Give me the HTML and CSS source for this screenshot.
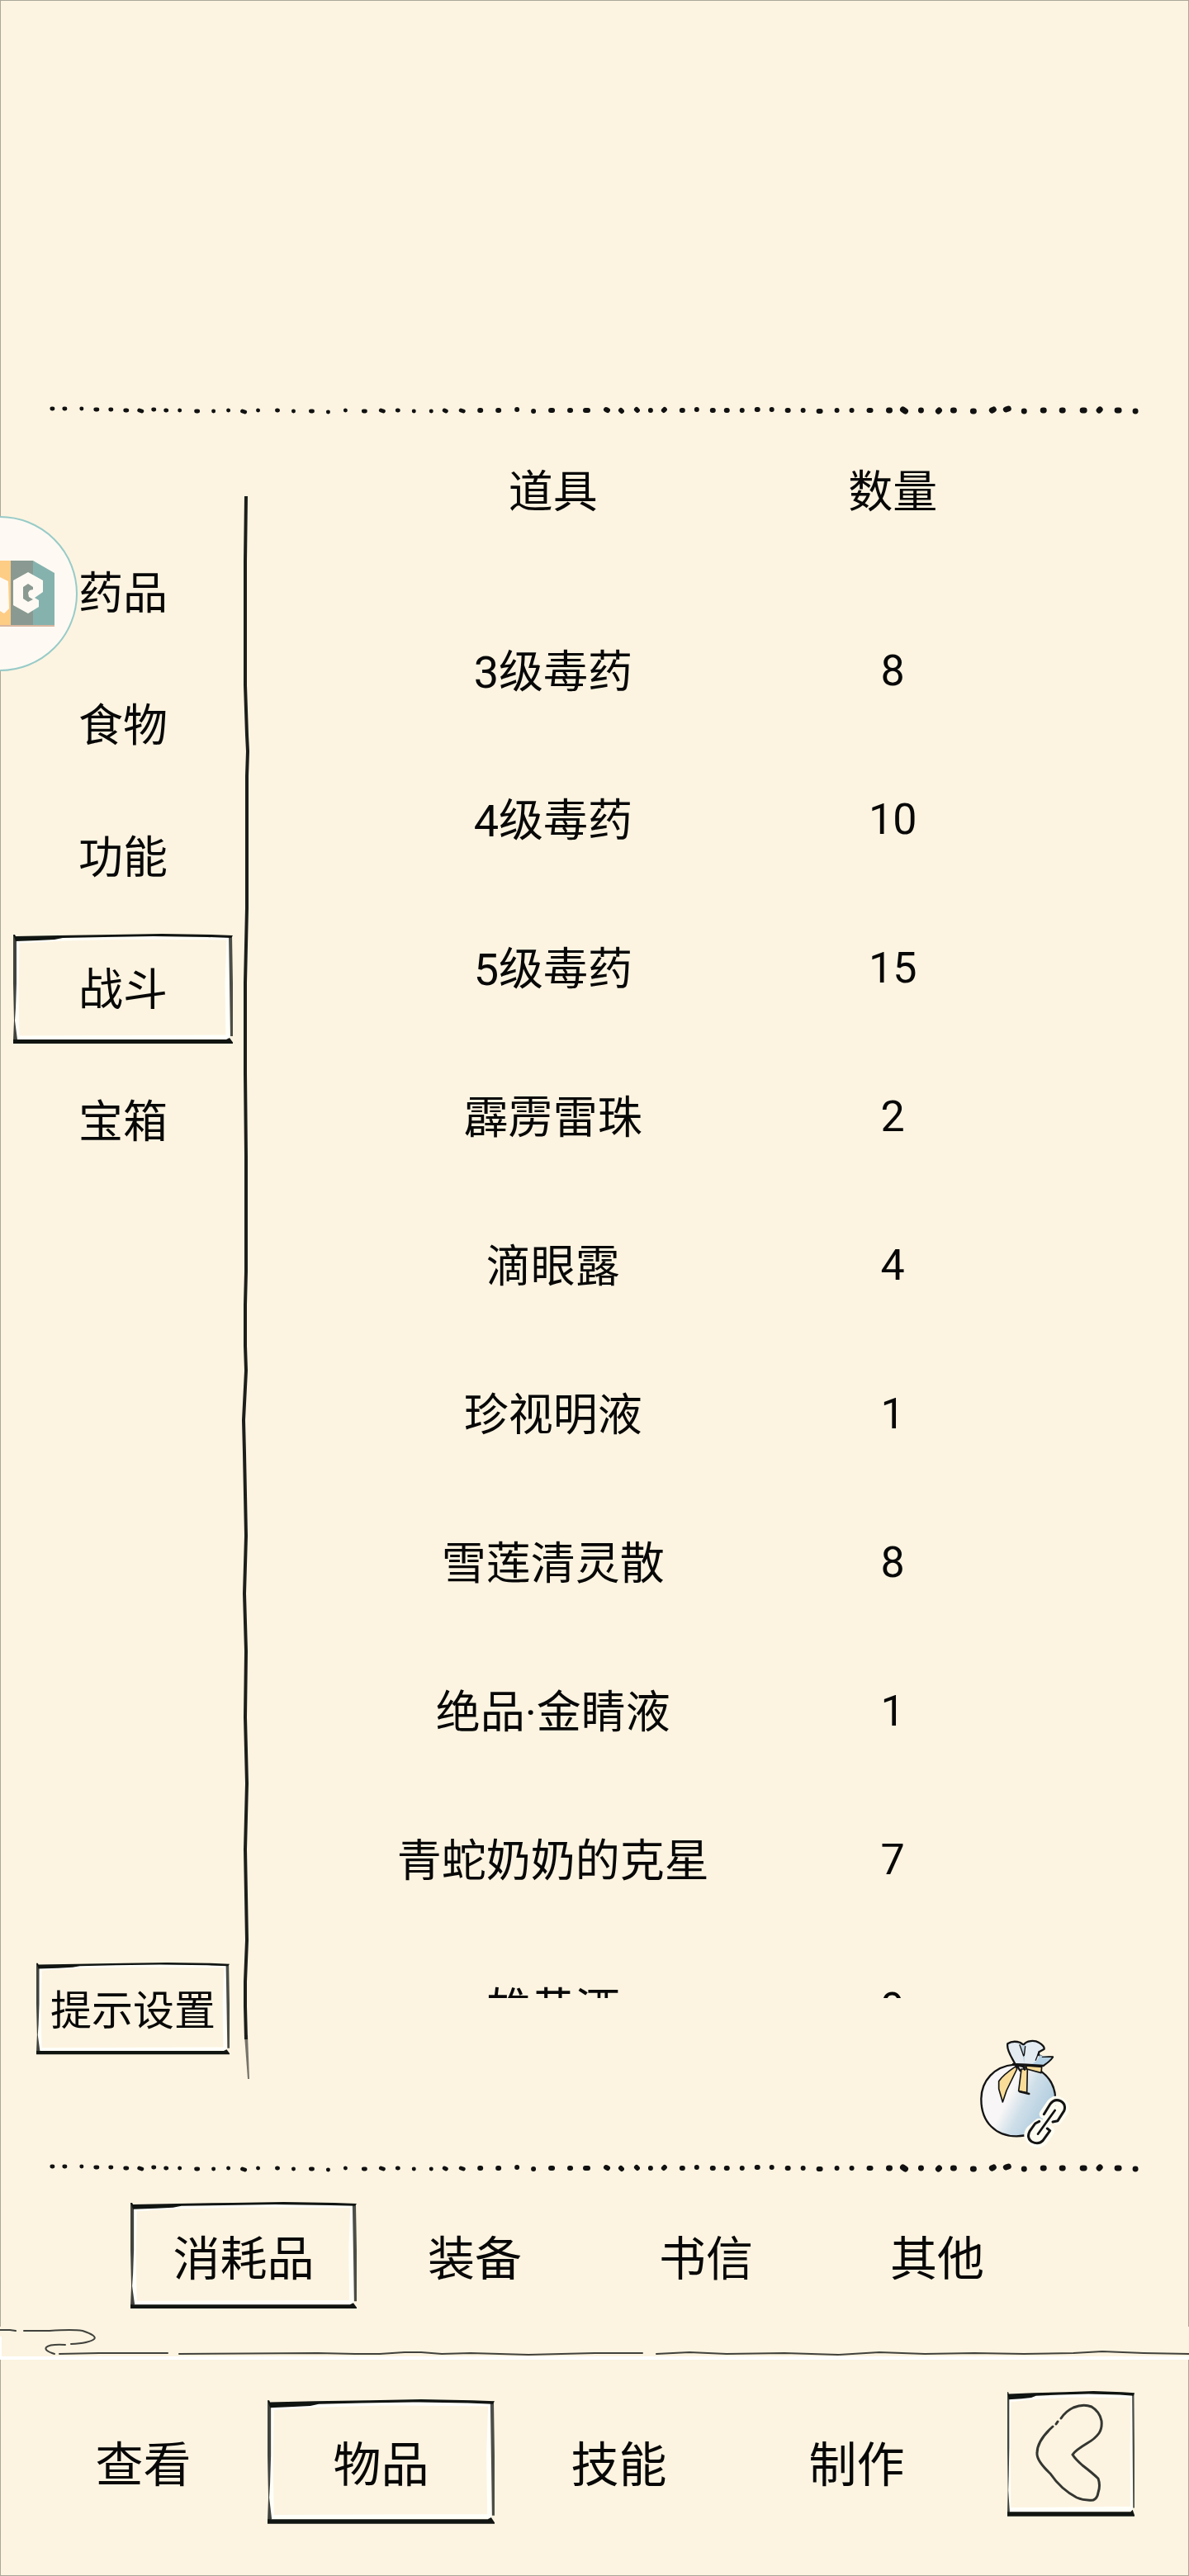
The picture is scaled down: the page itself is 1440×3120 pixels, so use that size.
FILE: index.html
```html
<!DOCTYPE html>
<html lang="zh-CN">
<head>
  <meta charset="UTF-8" />
  <meta name="viewport" content="width=device-width, initial-scale=1.0" />
  <title>物品</title>
  <link rel="stylesheet" href="styles.css">
</head>
<body>
  <!-- Shared drawings -->
  <svg class="defs" aria-hidden="true">
    <symbol id="frame" viewBox="0 0 266 134" preserveAspectRatio="none">
      <path d="M5 9 L60 6 L140 4 L261 5 L259 60 L260 125 L5 126 L4 70 Z" fill="none" stroke="#fffffa" stroke-width="5" />
      <path d="M0 1 L2 1 L3 3 L55 2 L120 1 L180 0 L240 1 L266 2 L264 5 L235 4 L170 3 L110 4 L60 5 L50 7 L30 8 L3 9 Z" fill="#111512" />
      <path d="M0 1 L4 5 L4 60 L3 90 L2 105 L5 128 L0 130 L1 105 L0 60 Z" fill="#111512" fill-opacity="0.8" />
      <path d="M265 2 L261 4 L262 60 L263 124 L266 124 L266 60 Z" fill="#111512" fill-opacity="0.75" />
      <path d="M0 128 L258 128 L262 126 L267 133 L0 133 Z" fill="#111512" />
    </symbol>
    <symbol id="dots" viewBox="0 0 1440 20">
      <g fill="none" stroke="#111" stroke-linecap="round">
        <path stroke-width="5" d="M62 8h1M77 8h1M98 8h0M115 9h2M133 9h1M151 10h2M168 10l3 1M185 9h1M200 10h1M217 10h0M237 11h2M258 11h0M276 10h0M293 11l3 1M312 10h0M335 10h1M355 11h0M376 11h2M397 12h0M418 10h0M440 11h2M461 10l3 1M481 10h1M501 11h0M522 11h0M538 10l2 1M558 10l3 1" />
        <path stroke-width="6" d="M581 10h1M603 10h1M626 9h0M646 11h0M667 10h2M690 10h1M709 10h3M734 9l2 1M752 10l1 1M771 9l1 1M788 10h0M804 10l1-1M826 10h1M844 9h0M863 10h1M880 10h1M899 10h0M917 9h1M935 9h0M954 10h1M973 10h0M992 11h2M1014 10h0M1032 10h0M1053 10h2" />
        <path stroke-width="7" d="M1077 10h1M1094 9l3 2M1116 10h0M1137 11l1-1M1155 10h1M1179 11h1M1202 10l2-1M1219 9l3-1M1241 11h0M1264 10h1M1287 10h1M1312 10h2M1332 10l1-1M1354 10h2M1376 11h0" />
      </g>
    </symbol>
  </svg>

  <div class="app">
    <section class="panel">
      <div class="panel-top"></div>
      <svg class="dots" aria-hidden="true"><use href="#dots" /></svg>

      <div class="main">
        <aside class="sidebar">
          <button class="side-item">药品</button>
          <button class="side-item">食物</button>
          <button class="side-item">功能</button>
          <button class="side-item"><svg class="frame" aria-hidden="true"><use href="#frame" /></svg>战斗</button>
          <button class="side-item">宝箱</button>
          <button class="hint-button"><svg class="frame" aria-hidden="true"><use href="#frame" /></svg>提示设置</button>
        </aside>

        <svg class="divider" viewBox="0 0 10 1920" preserveAspectRatio="none" aria-hidden="true">
          <path d="M6 1 L5 80 L5 160 L5 230 L7 290 L8 310 L7 340 L7 500 L5 590 L5 660 L5 700 L6 800 L6 940 L5 980 L5 1030 L6 1060 L4 1100 L3 1120 L4 1160 L6 1260 L4 1330 L6 1400 L5 1480 L7 1560 L5 1640 L7 1750 L5 1800 L5 1830 L6 1870" fill="none" stroke="#1c1e1b" stroke-width="4" stroke-linejoin="round" />
          <path d="M4 1865 L8 1918 L10 1918 L8 1865 Z" fill="#1c1e1b" fill-opacity="0.6" />
        </svg>

        <div class="content">
          <div class="list">
            <table class="items">
              <thead>
                <tr><th>道具</th><th>数量</th></tr>
              </thead>
              <tbody>
                <tr><td>3级毒药</td><td class="count">8</td></tr>
                <tr><td>4级毒药</td><td class="count">10</td></tr>
                <tr><td>5级毒药</td><td class="count">15</td></tr>
                <tr><td>霹雳雷珠</td><td class="count">2</td></tr>
                <tr><td>滴眼露</td><td class="count">4</td></tr>
                <tr><td>珍视明液</td><td class="count">1</td></tr>
                <tr><td>雪莲清灵散</td><td class="count">8</td></tr>
                <tr><td>绝品·金睛液</td><td class="count">1</td></tr>
                <tr><td>青蛇奶奶的克星</td><td class="count">7</td></tr>
                <tr><td>雄黄酒</td><td class="count">9</td></tr>
              </tbody>
            </table>
          </div>
          <div class="bag-row">
            <button class="bag" aria-label="锦囊">
              <svg viewBox="132 87 336 408" aria-hidden="true">
                <defs>
                  <linearGradient id="bagFill" x1="0" y1="0.2" x2="1" y2="0.7">
                    <stop offset="0.4" stop-color="#f8f6f6" />
                    <stop offset="0.6" stop-color="#cfdfe9" />
                    <stop offset="1" stop-color="#a6c6dc" />
                  </linearGradient>
                </defs>
                <g stroke="#141414" stroke-width="7" stroke-linejoin="round" stroke-linecap="round">
                  <path d="M262 182 C190 188 142 240 142 308 C142 392 196 442 270 442 C350 442 412 388 412 312 C412 266 394 232 362 208 L300 190 Z" fill="url(#bagFill)" />
                  <path d="M266 182 C258 162 232 130 238 106 C250 98 266 96 284 102 L296 110 C306 94 336 92 352 102 C364 108 374 120 370 126 L352 136 L350 146 L364 154 L402 154 C394 168 380 176 370 184 Z" fill="#e4ecf2" />
                  <path d="M354 148 L400 155 C390 168 380 174 368 183 L316 182 C340 176 350 164 354 148 Z" fill="#b4d0e3" stroke="none" />
                  <path d="M286 112 L298 178 L304 112 Z" fill="#c3d6e3" stroke="none" />
                  <path d="M364 154 L402 154 C394 168 380 176 370 184 M350 140 L340 166 M282 110 L296 150 M302 116 L298 148" fill="none" stroke-width="4" />
                  <path d="M268 188 C244 204 220 222 206 242 L206 270 L220 318 L234 276 L272 198 Z" fill="#f8dc98" stroke-width="5" />
                  <path d="M288 198 L310 198 L308 284 L278 278 Z" fill="#f8dc98" stroke-width="5" />
                  <path d="M304 186 L362 190 L360 212 L308 198 Z" fill="#f8dc98" stroke-width="5" />
                  <path d="M258 180 L300 182 L368 186 M268 190 L292 182 L300 200 M282 280 L316 288 M270 184 L284 204" fill="none" />
                </g>
                <!-- link badge -->
                <g fill="none" stroke-linecap="round" stroke-linejoin="round">
                  <g stroke="#fdfdf2" stroke-width="34">
                    <path d="M370 362 L396 324 Q412 306 430 318 Q450 330 442 352 L418 384 M352 394 L322 420 Q306 440 326 458 Q346 474 366 460 L392 422" />
                    <path d="M348 434 L410 348" />
                  </g>
                  <g stroke="#141414" stroke-width="9">
                    <path d="M370 362 L392 326 Q408 304 430 314 Q452 326 443 350 L420 386 L402 390" />
                    <path d="M353 388 L338 396 L318 424 Q306 448 326 462 Q350 474 366 458 L392 422 L382 414" />
                    <path d="M348 434 L410 348" stroke-width="8" />
                  </g>
                </g>
              </svg>
            </button>
          </div>
        </div>
      </div>

      <svg class="dots" aria-hidden="true"><use href="#dots" /></svg>

      <nav class="tabs">
        <button class="tab"><svg class="frame" aria-hidden="true"><use href="#frame" /></svg>消耗品</button>
        <button class="tab">装备</button>
        <button class="tab">书信</button>
        <button class="tab">其他</button>
      </nav>
    </section>

    <svg class="wave" viewBox="0 0 1440 40" preserveAspectRatio="none" aria-hidden="true">
      <path d="M0 36h1440v4H0z M0 12h2v24H0z" fill="#fff" />
      <path d="M0 4 L12 4 L19 5 M29 5 L60 5 Q88 3 100 5 Q118 11 114 15 Q108 20 86 21 M79 22 Q60 21 56 25 Q53 29 66 33 M72 33 L120 32 L203 32 M217 33 L385 32 L430 33 L460 33 L490 31 L510 31 L535 33 L570 32 L640 34 L720 32 L778 32 M795 33 L835 31 L880 33 L950 32 L1015 34 L1065 31 L1120 33 L1180 32 L1240 33 L1300 32 L1335 30 L1385 32 L1440 33" fill="none" stroke="#41423d" stroke-width="2" stroke-linecap="round" />
    </svg>

    <nav class="bottom-nav">
      <button class="nav-item">查看</button>
      <button class="nav-item"><svg class="frame" aria-hidden="true"><use href="#frame" /></svg>物品</button>
      <button class="nav-item">技能</button>
      <button class="nav-item">制作</button>
      <button class="back" aria-label="返回">
        <svg class="frame" aria-hidden="true"><use href="#frame" /></svg>
        <svg class="arrow" viewBox="0 0 154 153" aria-hidden="true">
          <path d="M65 33 Q71 24 80 20 Q92 15 102 19 Q112 25 114 36 Q115 45 111 51 Q106 58 97 63 Q82 72 79 77 Q82 82 91 90 Q104 100 110 106 Q113 114 110 123 Q109 130 104 132 Q93 133 84 129 Q65 119 52 100 Q35 84 36 75 Q36 60 55 43 M59 40 L61 37" fill="none" stroke="#343631" stroke-width="3" stroke-linecap="round" />
        </svg>
      </button>
    </nav>

    <!-- Floating launcher, half hidden at the left edge -->
    <button class="floater" aria-label="悬浮球">
      <svg viewBox="0 0 95 188" aria-hidden="true">
        <circle cx="0" cy="94" r="93" fill="#fefaf3" stroke="#98cbc8" stroke-width="2" />
        <path d="M0 54h13v79H0z" fill="#fdcc85" />
        <path d="M13 54h27v79H13z" fill="#8a9a92" />
        <path d="M40 54 L66 69 V133 H40z" fill="#86b2ae" />
        <path d="M0 133h66" stroke="#d9b7a0" stroke-width="2" />
        <path d="M0 74 L10 79 L11 112 L5 118 L0 115 Z M34 68 L52 78 V92 L42 99 L47 102 V110 L34 118 L16 108 V78 Z" fill="#fefaf3" />
        <path d="M34 82 L40 86 V89 L36 90 L34 93 L35 98 L40 101 L34 104 L28 100 V86 Z" fill="#8a9a92" />
      </svg>
    </button>
  </div>
</body>
</html>
```
FILE: styles.css
```css
* {
  box-sizing: border-box;
}
body {
  margin: 0;
  background-color: #fcf4e1;
  color: #080808;
  font-family: Roboto, "Noto Sans CJK SC", sans-serif;
  font-size: 54px;
}
button {
  position: relative;
  display: block;
  padding: 0;
  border: none;
  background: none;
  color: inherit;
  font: inherit;
  white-space: nowrap;
  cursor: pointer;
}
.defs {
  position: absolute;
  width: 0;
  height: 0;
}
.app {
  position: relative;
  display: flex;
  flex-direction: column;
  height: 100vh;
}
.panel {
  flex: 1;
  min-height: 0;
  display: flex;
  flex-direction: column;
  border: 1px solid #aaa799;
  border-bottom: none;
}
.panel-top {
  height: 486px;
}
.dots {
  display: block;
  flex: none;
  width: 100%;
  height: 20px;
}
/* Hand drawn box behind the active item */
.frame {
  position: absolute;
  inset: 0;
  width: 100%;
  height: 100%;
  overflow: visible;
}
.main {
  flex: 1;
  min-height: 0;
  display: flex;
}

/* Left categories */
.sidebar {
  display: flex;
  flex-direction: column;
  gap: 26px;
  width: 291px;
  padding: 144px 10px 127px 15px;
}
.side-item {
  height: 134px;
  padding-bottom: 8px;
}
.hint-button {
  align-self: flex-end;
  width: 234px;
  height: 112px;
  margin: auto 4px 0 0;
  padding-bottom: 4px;
  font-size: 50px;
}
.divider {
  flex: none;
  width: 10px;
  height: auto;
  margin: 93px 0 96px;
}

/* Item list */
.content {
  flex: 1;
  min-width: 0;
  display: flex;
  flex-direction: column;
}
.list {
  flex: 1;
  min-height: 0;
  padding-left: 10px;
  overflow-y: auto;
  scrollbar-width: none;
}
.items {
  width: 73%;
  margin: 0 auto;
  border-collapse: collapse;
  table-layout: fixed;
  text-align: center;
  white-space: nowrap;
}
.items th {
  position: sticky;
  top: 0;
  padding: 60px 0 95px;
  background-color: #fcf4e1;
  font-weight: normal;
  line-height: 60px;
}
.items td {
  height: 180px;
  padding: 0 0 6px;
}
.items .count {
  padding: 0;
  font-size: 52px;
}
.bag-row {
  display: flex;
  justify-content: flex-end;
  padding: 49px 142px 11px 0;
}
.bag {
  width: 112px;
  height: 136px;
}
.bag svg,
.floater svg {
  display: block;
  width: 100%;
  height: 100%;
}

/* Item type tabs */
.tabs {
  display: grid;
  grid-template-columns: repeat(4, 1fr);
  gap: 6px;
  padding: 31px 167px 21px 157px;
}
.tab {
  height: 130px;
  padding-bottom: 2px;
  font-size: 57px;
}
.wave {
  display: block;
  flex: none;
  width: 100%;
  height: 40px;
}

/* Bottom navigation */
.bottom-nav {
  display: flex;
  align-items: flex-end;
  gap: 13px;
  padding: 38px 65px 61px 35px;
  border: 1px solid #aaa799;
  border-top: none;
}
.nav-item {
  flex: 1;
  height: 152px;
  padding-bottom: 2px;
  font-size: 58px;
}
.back {
  width: 154px;
  height: 153px;
  margin: 0 0 9px 32px;
}
.arrow {
  position: absolute;
  inset: 0;
}

.floater {
  position: absolute;
  top: 625px;
  left: 0;
  width: 95px;
  height: 188px;
}
```
